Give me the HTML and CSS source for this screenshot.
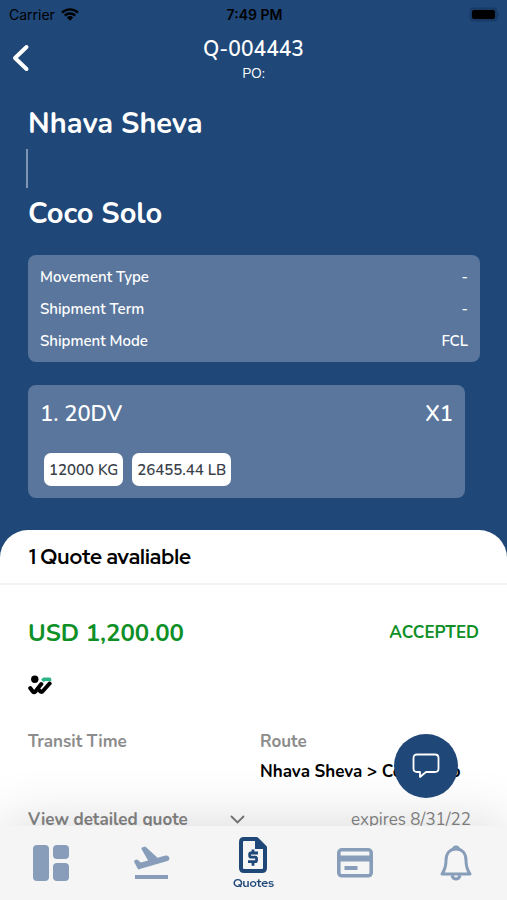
FILE: index.html
```html
<!DOCTYPE html>
<html lang="en">
<head>
<meta charset="utf-8">
<meta name="viewport" content="width=device-width, initial-scale=1">
<title>Quote Q-004443</title>
<link rel="stylesheet" href="styles.css">
</head>
<body>
<div class="status">
  <span class="carrier">Carrier
    <svg width="18" height="13" viewBox="0 0 18 13" aria-hidden="true"><path d="M1 4.6a11.6 11.6 0 0 1 16 0M3.8 7.5a7.6 7.6 0 0 1 10.4 0" fill="none" stroke="#000" stroke-width="2.4"/><path d="M5.8 9.4a4.8 4.8 0 0 1 6.4 0L9 12.8z"/></svg>
  </span>
  <span class="clock">7:49 PM</span>
  <svg class="battery" width="31" height="15" viewBox="0 0 31 15" aria-hidden="true"><rect x=".5" y=".5" width="28" height="14" rx="4" fill="#183a66"/><rect x="3" y="3" width="23" height="9" rx="2"/><path d="M29 5v5q2-2.500 0-5" fill="#183a66"/></svg>
</div>
<header class="top">
  <button class="back" aria-label="Back"><svg width="18" height="28" viewBox="0 0 18 28" aria-hidden="true"><path d="M14.500 3 3 14l11.500 11" fill="none" stroke="#fff" stroke-width="4" stroke-linecap="round" stroke-linejoin="round"/></svg></button>
  <div class="heading">
    <h1>Q-004443</h1>
    <p>PO:</p>
  </div>
</header>
<main>
  <section class="summary">
    <h2>Nhava Sheva</h2>
    <div class="leg"></div>
    <h2>Coco Solo</h2>
    <dl class="terms">
      <div><dt>Movement Type</dt><dd>-</dd></div>
      <div><dt>Shipment Term</dt><dd>-</dd></div>
      <div><dt>Shipment Mode</dt><dd>FCL</dd></div>
    </dl>
    <div class="cargo">
      <div class="cargo-title"><span>1. 20DV</span><span>X1</span></div>
      <div class="chips"><span>12000 KG</span><span>26455.44 LB</span></div>
    </div>
  </section>
  <section class="sheet">
    <h3>1 Quote avaliable</h3>
    <article class="quote">
      <div class="row price"><strong>USD 1,200.00</strong><span>ACCEPTED</span></div>
      <svg class="logo" width="24" height="20" viewBox="0 0 24 20" aria-hidden="true"><path d="M14.500 6 16 4.300h5.500v2" fill="none" stroke="#2cb584" stroke-width="3.600" stroke-linejoin="round"/><circle cx="6.800" cy="4.200" r="3.700"/><path d="M2.200 13l2.600 3.500q1.300 1.600 2.600 0L13.300 9M11.500 15.500q1.800 2.500 3.400.5L21.600 8.500" fill="none" stroke="#000" stroke-width="4" stroke-linecap="round" stroke-linejoin="round"/></svg>
      <div class="facts">
        <span>Transit Time</span>
        <div><span>Route</span><b>Nhava Sheva &gt; Coco Solo</b></div>
      </div>
      <div class="row more">
        <button>View detailed quote <svg width="15" height="10" viewBox="0 0 15 10" aria-hidden="true"><path d="m1.500 1.500 6 6 6-6" fill="none" stroke="#777" stroke-width="1.800" stroke-linecap="round"/></svg></button>
        <span>expires 8/31/22</span>
      </div>
    </article>
  </section>
</main>
<button class="chat" aria-label="Chat"><svg width="28" height="26" viewBox="0 0 28 26" aria-hidden="true"><path d="M5 1.500h18q3.500 0 3.500 3.500v10.500q0 3.500-3.500 3.500H14l-6 5v-5H5q-3.500 0-3.500-3.500V5q0-3.500 3.500-3.500z" fill="none" stroke="#fff" stroke-width="1.800" stroke-linejoin="round"/></svg></button>
<nav class="tabs">
  <a href="#" aria-label="Dashboard"><svg width="36" height="36" viewBox="0 0 36 36" aria-hidden="true"><rect width="16" height="36" rx="4"/><rect x="20" width="16" height="14" rx="4"/><rect x="20" y="18" width="16" height="18" rx="4"/></svg></a>
  <a href="#" aria-label="Shipments"><svg width="36" height="34" viewBox="0 0 36 34" aria-hidden="true"><path d="M1 29h33v4H1z"/><path d="M4.200 23.600.3 16.200q-.6-1.700 1-2.200l1.900-.4 3.700 3 7.200-2L7.600 3.300Q7.200 1.600 8.600 1.200l2.700-.7 12.200 11.200 8-2.100q2.900-.6 3.700 2t-1.900 3.500z"/></svg></a>
  <a href="#" class="active"><svg width="28" height="36" viewBox="0 0 28 36" aria-hidden="true"><path d="M4 2h13.500L26 10.500V31q0 3-3 3H5q-3 0-3-3V5q0-3 3-3z" fill="none" stroke="#1f4778" stroke-width="4" stroke-linejoin="round"/><path d="M16 2h2l8 8v2H16z"/><path d="M19 16h-7.200q-1.200 0-1.200 2t1.200 2.200h4.600q1.200 0 1.200 2.200t-1.200 2.200H9M14 12.500v4M14 24.500v4.200" fill="none" stroke="#1f4778" stroke-width="2.800"/></svg>Quotes</a>
  <a href="#" aria-label="Payments"><svg width="36" height="30" viewBox="0 0 36 30" aria-hidden="true"><rect x="1.800" y="1.800" width="32.400" height="26" rx="3" fill="none" stroke="#879db9" stroke-width="3.600"/><path d="M2 7.500h32v6H2zM7.500 18h13v4h-13z"/></svg></a>
  <a href="#" aria-label="Notifications"><svg width="32" height="36" viewBox="0 0 32 36" aria-hidden="true"><path d="M6 15.500C6 8 10 4 16 4s10 4 10 11.500c0 6.500 1.200 9.500 4 13.500H2c2.800-4 4-7 4-13.500zM12 30.500q1 3.500 4 3.500t4-3.500M13 4.500q1-2.500 3-2.500t3 2.500" fill="none" stroke="#879db9" stroke-width="3" stroke-linejoin="round"/></svg></a>
</nav>
</body>
</html>
```
FILE: styles.css
```css
* { box-sizing: border-box; }
body {
  margin: 0;
  background: #1f4778;
  color: #fff;
  font-family: "Nunito", "Open Sans", sans-serif;
  font-weight: 700;
}
h1, h2, h3, p, dl, dd { margin: 0; font-weight: 700; }
button { border: 0; padding: 0; background: none; color: inherit; font: inherit; cursor: pointer; }
svg { display: block; flex: none; }

.status {
  display: grid;
  grid-template-columns: 1fr auto 1fr;
  align-items: center;
  height: 28px;
  padding: 0 7px 0 9px;
  color: #000;
  font: 400 14px Inter, sans-serif;
}
.carrier { display: flex; align-items: center; gap: 6px; }
.clock { font-weight: 600; }
.battery { justify-self: end; }

.top {
  display: grid;
  grid-template-columns: 28px 1fr 28px;
  align-items: start;
  padding: 8px 12px 0;
}
.back { height: 44px; }
.heading { text-align: center; }
.heading h1 { font-size: 21px; line-height: 26px; font-weight: 600; }
.heading p { font-size: 14px; line-height: 24px; font-weight: 400; }

.summary { padding: 18px 27px 32px 28px; }
.summary h2 { font-size: 29px; line-height: 40px; }
.leg { width: 2px; height: 39px; margin: 5px 0 6px -2px; background: #7e95b3; }
.terms {
  margin-top: 21px;
  padding: 6px 12px 5px;
  border-radius: 8px;
  background: #5a769c;
  font-size: 15px;
}
.terms div { display: flex; justify-content: space-between; line-height: 32px; }
.terms dt, .terms dd { font-weight: 600; }
.cargo {
  margin: 23px 15px 0 0;
  padding: 13px 12px 12px;
  border-radius: 8px;
  background: #5a769c;
}
.cargo-title { display: flex; justify-content: space-between; font-size: 22px; line-height: 32px; font-weight: 600; }
.chips { display: flex; gap: 9px; margin: 23px 0 0 4px; }
.chips span {
  padding: 1px 5px 0;
  border-radius: 7px;
  background: #fff;
  color: #3b3f4a;
  font-size: 15px;
  font-weight: 600;
  line-height: 32px;
}

.sheet { border-radius: 28px 28px 0 0; background: #fff; color: #000; }
.sheet h3 {
  padding: 0 29px;
  border-bottom: 2px solid #f3f3f3;
  font-family: "Red Hat Display", Inter, sans-serif;
  font-size: 21px;
  line-height: 53px;
}
.quote { padding: 30px 28px 67px; }
.row { display: flex; align-items: center; justify-content: space-between; }
.price { color: #0e9027; line-height: 36px; }
.price strong { font-size: 24px; font-weight: 700; }
.price span { font-size: 17px; font-weight: 700; }
.logo { margin: 24px 0 35px; }
.facts { display: grid; grid-template-columns: 232px 1fr; color: #8c8c8c; font-size: 17px; line-height: 24px; }
.facts div { display: flex; flex-direction: column; gap: 6px; white-space: nowrap; }
.facts b { color: #000; font-weight: 700; }
.more { margin-top: 24px; padding-right: 8px; color: #858585; font-size: 17px; line-height: 24px; }
.more button { display: flex; align-items: center; gap: 42px; }
.more span { font-weight: 400; }

.chat {
  position: fixed;
  right: 49px;
  bottom: 102px;
  z-index: 2;
  display: grid;
  place-items: center;
  width: 64px;
  height: 64px;
  border-radius: 50%;
  background: #1f4778;
}
.tabs {
  position: fixed;
  inset: auto 0 0;
  display: grid;
  grid-template-columns: repeat(5, 1fr);
  height: 74px;
  background: #f5f5f5;
  box-shadow: 0 0 60px rgba(0, 0, 0, .16);
}
.tabs a {
  display: flex;
  flex-direction: column;
  align-items: center;
  justify-content: center;
  gap: 3px;
  color: #1f4778;
  fill: #879db9;
  font: 700 12px/14px "Red Hat Display", Inter, sans-serif;
  text-decoration: none;
}
.tabs .active { fill: #1f4778; }
```
